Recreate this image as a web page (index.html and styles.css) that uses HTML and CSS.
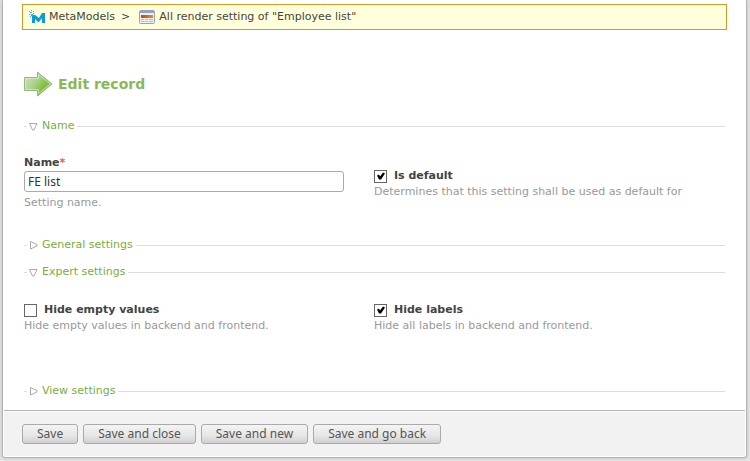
FILE: index.html
```html
<!DOCTYPE html>
<html lang="en">
<head>
<meta charset="utf-8">
<title>Edit record</title>
<link rel="stylesheet" href="styles.css">
</head>
<body>
<main class="panel">
  <nav class="breadcrumb" aria-label="Breadcrumb">
    <a href="#" class="crumb">
      <svg class="crumb-icon" width="16" height="14" viewBox="0 0 16 14" fill="#0b9bd7" aria-hidden="true">
        <path d="M3 13V6l1-1h2l4 3 3-5h3v10h-3V8l-3 4H9L6 9v4z"/>
        <path d="M0 1h1v1H0zM2 0h1v1H2zM1 2h2v1H1zM4 1h1v1H4zM0 4h1v1H0zM2 4h2v2H2zM4 3h1v1H4zM1 6h1v1H1z" opacity=".8"/>
      </svg>MetaModels</a>
    <span class="separator">&gt;</span>
    <a href="#" class="crumb">
      <svg class="crumb-icon" width="16" height="14" viewBox="0 0 16 14" aria-hidden="true">
        <defs><linearGradient id="bar"><stop offset="0" stop-color="#b84a06"/><stop offset="1" stop-color="#f08a1c"/></linearGradient></defs>
        <rect x=".5" y=".5" width="15" height="13" rx="1" fill="#eef0f3" stroke="#98a2ae"/>
        <path d="M1 1h14v2H1z" fill="#8ba6c6"/>
        <path d="M2 5h12v3H2z" fill="url(#bar)"/>
        <path d="M2 9h3v1H2zM6 9h3v1H6zM10 9h4v1h-4zM2 11h4v1H2zM7 11h2v1H7zM10 11h4v1h-4z" fill="#bbb"/>
      </svg>All render setting of "Employee list"</a>
  </nav>

  <form>
    <h1 class="title">
      <svg width="30" height="26" viewBox="0 0 30 26" aria-hidden="true">
        <defs><linearGradient id="arrow" x1="0" y1="0" x2="1" y2=".6"><stop offset="0" stop-color="#d3e7c3"/><stop offset=".5" stop-color="#a9d088"/><stop offset=".8" stop-color="#80bd3f"/><stop offset="1" stop-color="#a2cc7e"/></linearGradient></defs>
        <path d="M.5 6.500h13v-5.500L28 13 13.500 25v-5.500H.5z" fill="url(#arrow)" stroke="#95b77f"/>
        <path d="M1.500 7.500h13V3.500L26.500 13 14.500 22.500v-4h-13z" fill="none" stroke="#e3f0d8" opacity=".6"/>
      </svg>Edit record</h1>

    <section class="group">
      <h2 class="legend"><button type="button" class="toggle" aria-expanded="true">
        <svg class="triangle" width="9" height="9" viewBox="0 0 9 9" aria-hidden="true"><path d="M.5 1.500h7.500L5 8H3.500z"/></svg>Name</button></h2>
      <div class="fields fields-name">
        <div class="field">
          <label class="label" for="name">Name<span class="required">*</span></label>
          <input class="text" id="name" type="text" value="FE list">
          <p class="hint">Setting name.</p>
        </div>
        <div class="field field-beside-text">
          <label class="label"><input class="check" type="checkbox" checked>Is default</label>
          <p class="hint">Determines that this setting shall be used as default for</p>
        </div>
      </div>
    </section>

    <section class="group">
      <h2 class="legend"><button type="button" class="toggle" aria-expanded="false">
        <svg class="triangle" width="9" height="9" viewBox="0 0 9 9" aria-hidden="true"><path d="M1.500.5V8L8 5V3.500z"/></svg>General settings</button></h2>
    </section>

    <section class="group">
      <h2 class="legend"><button type="button" class="toggle" aria-expanded="true">
        <svg class="triangle" width="9" height="9" viewBox="0 0 9 9" aria-hidden="true"><path d="M.5 1.500h7.500L5 8H3.500z"/></svg>Expert settings</button></h2>
      <div class="fields fields-expert">
        <div class="field">
          <label class="label"><input class="check" type="checkbox">Hide empty values</label>
          <p class="hint">Hide empty values in backend and frontend.</p>
        </div>
        <div class="field">
          <label class="label"><input class="check" type="checkbox" checked>Hide labels</label>
          <p class="hint">Hide all labels in backend and frontend.</p>
        </div>
      </div>
    </section>

    <section class="group">
      <h2 class="legend"><button type="button" class="toggle" aria-expanded="false">
        <svg class="triangle" width="9" height="9" viewBox="0 0 9 9" aria-hidden="true"><path d="M1.500.5V8L8 5V3.500z"/></svg>View settings</button></h2>
    </section>

    <div class="actions">
      <button class="submit" type="submit">Save</button>
      <button class="submit" type="submit">Save and close</button>
      <button class="submit" type="submit">Save and new</button>
      <button class="submit" type="submit">Save and go back</button>
    </div>
  </form>
</main>
</body>
</html>
```
FILE: styles.css
```css
* {
  box-sizing: border-box;
}

body {
  margin: 0;
  padding: 0 3px 3px 2px;
  background: #e6e6e6;
  color: #444;
  font: 11px/16px "DejaVu Sans", Verdana, sans-serif;
}

.panel {
  padding: 4px 1px 1px;
  background: #fff;
  border: 1px solid #b4b4b4;
  border-top: 0;
  border-radius: 0 0 3px 3px;
  box-shadow: 0 0 4px #bbb;
}

.breadcrumb {
  display: flex;
  align-items: center;
  height: 26px;
  margin: 0 18px;
  padding: 0 6px;
  background: #ffffdc;
  border: 1px solid #d59a22;
}

.crumb {
  display: flex;
  align-items: center;
  gap: 4px;
  color: inherit;
  text-decoration: none;
}

.separator {
  margin: 0 9px 0 6px;
}

.title {
  display: flex;
  align-items: center;
  gap: 4px;
  height: 28px;
  margin: 40px 20px 20px;
  color: #8ab858;
  font-size: 14px;
}

.group {
  margin: 0 20px 11px;
}

.legend {
  display: flex;
  align-items: center;
  margin: 0;
  font: inherit;
}

.legend::before,
.legend::after {
  content: "";
  height: 1px;
  background: #ddd;
}

.legend::before {
  width: 3px;
}

.legend::after {
  flex: 1;
}

.toggle {
  display: flex;
  align-items: center;
  gap: 4px;
  padding: 0 3px 0 2px;
  background: none;
  border: 0;
  color: #7aad42;
  font: inherit;
}

.triangle {
  fill: #fff;
  stroke: #aaa;
  stroke-linejoin: round;
}

.fields {
  display: grid;
  grid-template-columns: 1fr 1fr;
  padding-right: 1px;
}

.fields-name {
  padding-top: 21px;
  padding-bottom: 15px;
}

.fields-expert {
  padding-top: 22px;
  padding-bottom: 38px;
}

.field-beside-text {
  padding-top: 13px;
}

.label {
  display: flex;
  align-items: center;
  font-weight: bold;
}

.required {
  color: #e8622c;
}

.text {
  display: block;
  width: calc(100% - 30px);
  height: 21px;
  margin: 0 0 3px;
  padding: 0 3px;
  background: #fff;
  border: 1px solid #aaa;
  border-radius: 3px;
  color: #333;
  font: 12px "Noto Sans", sans-serif;
}

.hint {
  margin: 0;
  color: #999;
}

.check {
  appearance: none;
  width: 13px;
  height: 13px;
  margin: 0 7px 0 0;
  background: #fff;
  border: 1px solid #666;
}

.check:checked::after {
  content: "";
  display: block;
  height: 11px;
  background: #000;
  clip-path: polygon(2px 5px, 4px 4px, 5px 6px, 8px 2px, 10px 3px, 6px 9px, 4px 9px);
}

.actions {
  display: flex;
  flex-wrap: wrap;
  gap: 5px;
  padding: 13px 18px 12px;
  background: #f2f2f2;
  border-top: 1px solid #b4b4b4;
  box-shadow: inset 0 1px #fff;
}

.submit {
  height: 20px;
  padding: 0 14px;
  background: linear-gradient(#f4f4f4, #e6e6e6 60%, #cfcfcf);
  border: 1px solid #aaa;
  border-radius: 3px;
  color: #555;
  font: 12px/18px "Noto Sans", sans-serif;
}
```
